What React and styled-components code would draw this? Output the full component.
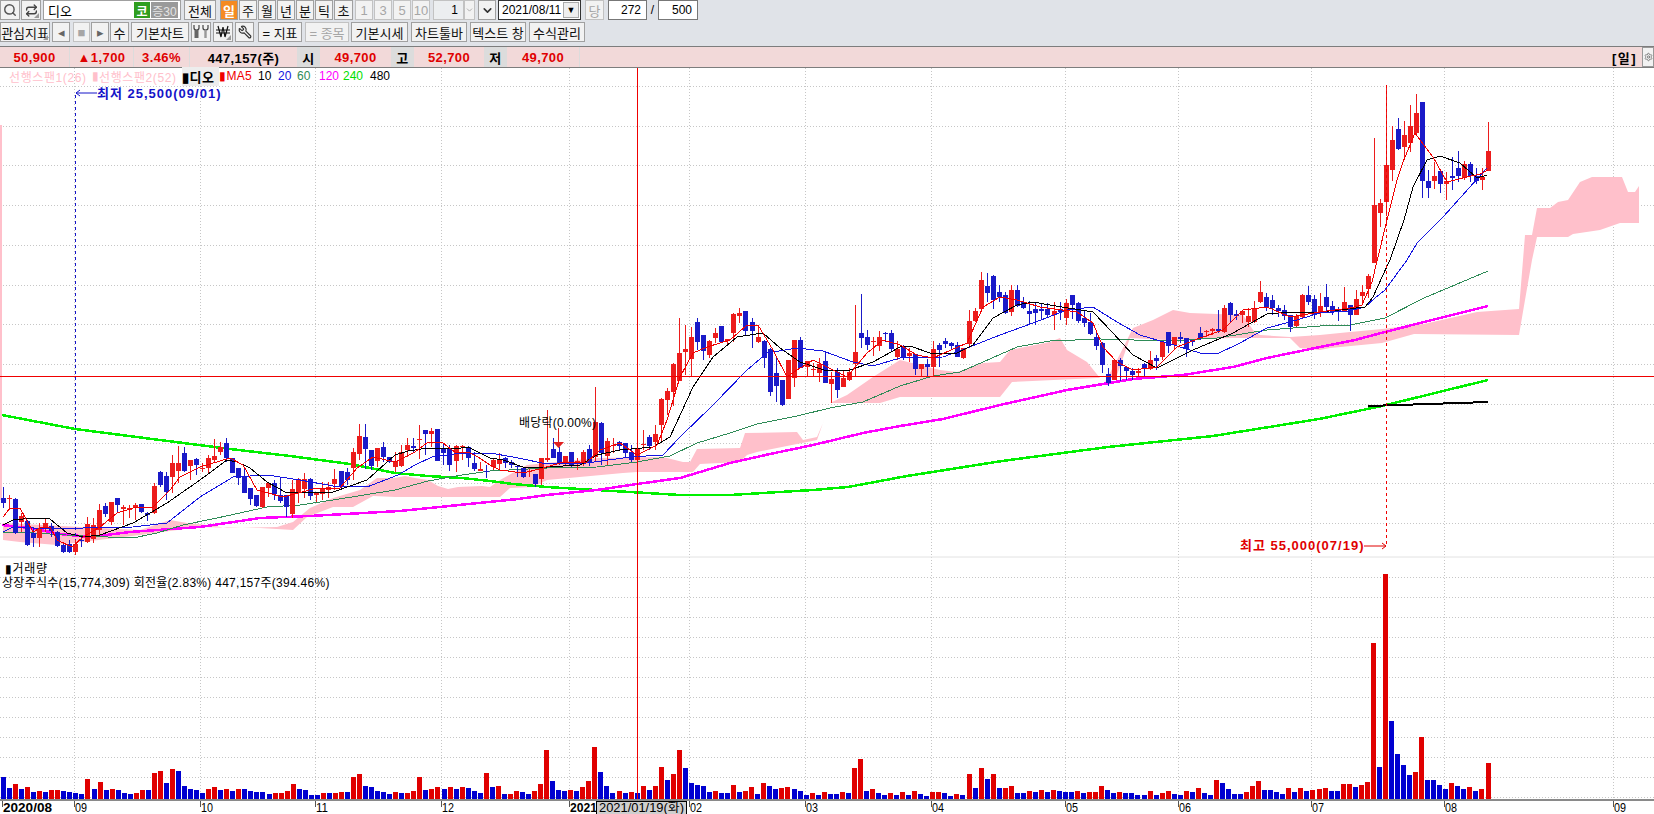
import React from 'react'
import styled, { createGlobalStyle } from 'styled-components'
import { Search, Repeat, Wrench, ChevronDown, Settings } from 'lucide-react'

const FONT = '"Liberation Sans", "Noto Sans CJK KR", sans-serif'

const GlobalStyle = createGlobalStyle`
  html, body { margin: 0; padding: 0; background: #fff; overflow: hidden; }
  body { font-family: ${FONT}; font-size: 12px; color: #000; }
`

// raw numbers are read off 3x crops, z() brings them back to page pixels
const z = (x0, y0, k, rows) =>
  rows.map(([c, x, wt, bt, bb, wb]) => ({
    c,
    x: Math.round(x0 + x / k),
    wt: Math.round(y0 + wt / k),
    bt: Math.round(y0 + bt / k),
    bb: Math.round(y0 + bb / k),
    wb: Math.round(y0 + wb / k),
  }))

const candles = [
  ...z(0, 0, 1, [
    ['b', 3, 487, 498, 503, 508], ['r', 9, 495, 498, 499, 510], ['b', 15, 498, 499, 533, 534],
    ['r', 21, 513, 516, 522, 532], ['b', 27, 520, 521, 545, 546], ['b', 33, 527, 533, 538, 547],
    ['r', 39, 523, 528, 538, 547], ['r', 45, 518, 523, 528, 532], ['b', 51, 523, 526, 531, 537],
    ['b', 57, 531, 532, 546, 547], ['b', 63, 542, 545, 552, 553], ['b', 69, 540, 544, 552, 553],
    ['r', 75, 540, 544, 552, 555], ['b', 81, 537, 540, 541, 547], ['r', 87, 517, 524, 542, 543],
    ['r', 93, 518, 525, 539, 543], ['r', 99, 504, 510, 530, 535], ['b', 105, 503, 506, 514, 517],
    ['r', 111, 502, 502, 522, 525], ['b', 117, 498, 498, 505, 513], ['r', 123, 505, 507, 509, 525],
    ['r', 129, 505, 508, 510, 518], ['r', 135, 503, 505, 508, 520], ['b', 141, 504, 504, 512, 513],
    ['b', 147, 512, 513, 515, 521],
  ]),
  ...z(0, 400, 3, [
    ['r', 462, 250, 258, 340, 342], ['b', 480, 212, 217, 255, 260], ['b', 498, 215, 228, 275, 300],
    ['r', 516, 165, 190, 232, 280], ['r', 534, 137, 188, 213, 250], ['b', 552, 140, 158, 212, 215],
    ['r', 570, 180, 180, 197, 240], ['b', 588, 175, 177, 195, 225], ['r', 606, 190, 205, 208, 215],
    ['r', 624, 165, 175, 205, 220], ['r', 642, 118, 168, 180, 185], ['r', 660, 125, 140, 155, 165],
    ['b', 678, 113, 130, 175, 185], ['b', 696, 175, 175, 218, 220], ['b', 714, 205, 205, 235, 255],
    ['b', 732, 205, 228, 278, 280], ['b', 750, 265, 265, 298, 315], ['b', 768, 285, 285, 318, 320],
    ['r', 786, 262, 262, 320, 325], ['r', 804, 250, 250, 265, 290], ['b', 822, 240, 250, 283, 300],
    ['b', 840, 235, 285, 303, 310], ['b', 858, 285, 285, 320, 350], ['r', 876, 240, 268, 342, 355],
    ['r', 894, 235, 237, 280, 310], ['r', 912, 220, 238, 268, 295], ['b', 930, 235, 237, 288, 300],
    ['r', 948, 280, 280, 285, 305], ['r', 966, 245, 268, 282, 300], ['r', 984, 245, 262, 270, 295],
    ['r', 1002, 208, 237, 252, 270], ['b', 1022, 213, 213, 260, 265], ['b', 1040, 205, 215, 240, 255],
    ['r', 1058, 145, 156, 205, 240], ['r', 1076, 72, 108, 162, 180], ['b', 1096, 72, 112, 147, 208],
    ['b', 1114, 150, 150, 197, 210], ['r', 1132, 143, 143, 182, 200], ['b', 1150, 127, 142, 170, 185],
    ['b', 1168, 170, 170, 185, 190], ['r', 1186, 155, 183, 200, 215],
  ]),
  ...z(395, 410, 3, [
    ['r', 18, 105, 127, 168, 170], ['r', 37, 85, 105, 120, 140], ['b', 55, 85, 108, 113, 130],
    ['r', 73, 45, 88, 90, 148], ['b', 91, 60, 60, 72, 135], ['r', 109, 55, 64, 72, 110],
    ['b', 127, 57, 57, 152, 152], ['b', 145, 100, 115, 130, 165], ['b', 163, 105, 118, 165, 183],
    ['r', 184, 105, 108, 153, 187], ['r', 202, 105, 108, 112, 150], ['b', 220, 108, 110, 143, 172],
    ['b', 238, 125, 160, 177, 182], ['r', 256, 155, 177, 182, 183], ['b', 274, 165, 184, 187, 205],
  ]),
  ...z(480, 280, 3, [
    ['r', 38, 535, 540, 562, 570], ['r', 56, 518, 540, 552, 568], ['b', 74, 530, 533, 549, 563],
    ['b', 92, 540, 545, 555, 563], ['b', 110, 556, 558, 562, 590], ['b', 128, 560, 563, 590, 593],
    ['r', 146, 568, 572, 575, 590], ['b', 164, 582, 582, 612, 622], ['r', 182, 535, 535, 597, 615],
    ['r', 200, 390, 535, 539, 545], ['b', 218, 475, 507, 533, 535], ['b', 236, 500, 517, 552, 555],
    ['r', 254, 528, 528, 550, 558], ['b', 272, 517, 517, 555, 560], ['r', 290, 535, 543, 549, 570],
    ['r', 308, 510, 515, 550, 558], ['b', 326, 495, 507, 545, 558], ['r', 344, 320, 425, 530, 545],
    ['b', 362, 425, 428, 520, 555], ['r', 382, 475, 483, 527, 555], ['r', 400, 475, 495, 497, 520],
    ['b', 418, 482, 487, 497, 510], ['b', 436, 490, 490, 520, 530], ['b', 454, 495, 516, 540, 545],
    ['r', 472, 505, 507, 540, 548], ['r', 490, 450, 492, 495, 510], ['b', 508, 465, 470, 497, 510],
    ['r', 526, 435, 462, 487, 510], ['r', 544, 355, 357, 435, 490], ['r', 562, 325, 333, 360, 405],
    ['r', 580, 250, 252, 335, 378], ['r', 598, 113, 220, 302, 302], ['r', 616, 135, 208, 216, 285],
    ['r', 634, 140, 170, 237, 288], ['b', 652, 113, 125, 185, 210], ['b', 670, 165, 165, 212, 240],
    ['r', 688, 180, 183, 225, 235], ['r', 706, 145, 160, 173, 190], ['b', 724, 138, 138, 185, 185],
    ['r', 742, 178, 178, 183, 195], ['r', 760, 100, 102, 158, 185], ['r', 778, 83, 100, 107, 130],
    ['b', 796, 93, 93, 152, 165], ['b', 816, 113, 125, 152, 205], ['r', 834, 135, 170, 187, 190],
    ['b', 852, 180, 182, 233, 265], ['b', 870, 205, 207, 335, 347], ['b', 888, 235, 280, 318, 365],
    ['b', 906, 300, 300, 375, 378], ['r', 924, 240, 240, 357, 357], ['r', 942, 180, 180, 295, 320],
    ['b', 960, 172, 180, 263, 263], ['r', 980, 243, 243, 262, 290], ['r', 998, 250, 268, 271, 290],
    ['r', 1016, 235, 252, 278, 305], ['b', 1034, 213, 243, 310, 310], ['r', 1052, 275, 297, 312, 368],
    ['b', 1070, 265, 275, 330, 353], ['r', 1088, 270, 295, 320, 320], ['r', 1106, 265, 275, 300, 302],
    ['r', 1124, 75, 215, 252, 290], ['b', 1142, 42, 160, 173, 205], ['b', 1160, 150, 170, 195, 210],
    ['r', 1178, 172, 182, 184, 228], ['r', 1196, 153, 170, 198, 213], ['b', 1214, 155, 160, 163, 185],
    ['b', 1232, 150, 158, 208, 212], ['r', 1250, 183, 208, 232, 240],
  ]),
  ...z(900, 240, 3, [
    ['b', 10, 315, 320, 350, 360], ['r', 28, 325, 340, 347, 365], ['b', 46, 343, 343, 387, 405],
    ['r', 64, 372, 372, 387, 408], ['b', 82, 358, 372, 381, 410], ['r', 100, 303, 327, 382, 410],
    ['b', 118, 308, 314, 330, 380], ['b', 136, 293, 303, 312, 325], ['b', 154, 305, 310, 318, 330],
    ['b', 172, 305, 315, 350, 352], ['r', 190, 325, 325, 355, 358], ['r', 208, 210, 243, 312, 318],
    ['r', 226, 205, 212, 243, 245], ['r', 244, 97, 120, 207, 212], ['b', 262, 100, 138, 158, 187],
    ['b', 280, 105, 108, 180, 207], ['b', 298, 135, 156, 170, 185], ['b', 316, 155, 165, 218, 222],
    ['r', 334, 135, 150, 215, 228], ['b', 352, 135, 150, 198, 200], ['b', 370, 170, 185, 203, 207],
    ['b', 388, 183, 213, 221, 255], ['b', 406, 185, 207, 219, 255], ['b', 424, 190, 207, 213, 237],
    ['b', 442, 190, 207, 225, 232], ['r', 462, 185, 213, 225, 270], ['b', 480, 185, 208, 215, 240],
    ['r', 498, 178, 190, 233, 255], ['b', 517, 165, 165, 195, 237], ['b', 535, 185, 188, 243, 250],
    ['b', 553, 210, 233, 250, 260], ['b', 571, 218, 245, 282, 285], ['b', 589, 280, 291, 318, 330],
    ['b', 607, 305, 310, 375, 400], ['b', 625, 385, 403, 428, 437], ['r', 643, 360, 360, 420, 420],
    ['b', 661, 353, 360, 377, 422], ['b', 679, 380, 381, 392, 420], ['b', 697, 385, 392, 405, 420],
    ['r', 715, 385, 393, 398, 408], ['b', 733, 368, 372, 385, 408], ['r', 751, 333, 360, 388, 390],
    ['b', 769, 345, 354, 362, 390], ['r', 787, 305, 305, 350, 360], ['b', 805, 276, 276, 318, 340],
    ['r', 823, 292, 292, 315, 330], ['b', 841, 275, 292, 296, 310], ['b', 859, 293, 295, 327, 352],
    ['b', 877, 300, 300, 307, 317], ['b', 899, 262, 278, 295, 300], ['r', 917, 270, 272, 277, 290],
    ['r', 935, 265, 268, 273, 285], ['b', 953, 210, 266, 272, 278], ['r', 971, 195, 204, 275, 278],
    ['b', 989, 185, 188, 225, 245], ['b', 1007, 210, 222, 228, 240], ['r', 1025, 210, 212, 226, 248],
    ['r', 1043, 205, 228, 246, 260], ['r', 1061, 182, 204, 246, 248], ['r', 1079, 123, 155, 187, 190],
    ['b', 1097, 158, 171, 203, 212], ['b', 1115, 165, 180, 205, 225], ['b', 1133, 195, 204, 212, 232],
    ['b', 1151, 195, 211, 228, 240], ['b', 1169, 225, 225, 260, 275], ['r', 1187, 222, 228, 258, 260],
    ['r', 1205, 163, 165, 232, 233], ['b', 1223, 138, 165, 185, 195], ['b', 1241, 165, 178, 225, 237],
  ]),
  ...z(1315, 210, 3, [
    ['r', 14, 250, 288, 310, 322], ['b', 32, 222, 262, 292, 310], ['b', 50, 273, 288, 305, 315],
    ['b', 68, 290, 300, 304, 332], ['r', 86, 232, 277, 303, 305], ['b', 106, 285, 285, 315, 362],
    ['r', 124, 240, 267, 315, 315], ['r', 142, 225, 246, 258, 285], ['r', 160, 192, 198, 236, 265],
    ['r', 178, -216, -15, 160, 160],
  ]),
  ...z(1300, 0, 3, [
    ['r', 241, 598, 610, 640, 680], ['r', 259, 258, 495, 605, 648], ['r', 277, 378, 420, 510, 543],
    ['b', 295, 354, 387, 447, 450], ['r', 313, 363, 405, 440, 478], ['r', 331, 315, 378, 428, 455],
    ['r', 349, 282, 339, 400, 405], ['b', 367, 306, 306, 543, 593], ['b', 385, 510, 543, 563, 593],
    ['r', 403, 487, 528, 543, 567], ['b', 421, 510, 513, 552, 578], ['r', 439, 515, 543, 552, 600],
    ['b', 457, 470, 528, 534, 570], ['b', 475, 453, 504, 528, 545], ['r', 493, 483, 492, 533, 540],
    ['b', 511, 487, 492, 528, 545], ['b', 529, 505, 528, 543, 553], ['r', 547, 505, 531, 540, 570],
    ['r', 565, 366, 453, 512, 512],
  ]),
]

// volume bars, positive red, negative blue, height in px
const volumes = [
  -22, -11, 15, -10, 12, -7, 8, -7, 9, 9, -8, -7, -6, -5, 20, -10, 17, -9, 10, -9, -6, -5, 6, 9, -9, 26, 28, -16, 30, -28,
  -13, -10, -9, -6, 10, 12, -9, 10, -8, 10, -10, -8, -7, -7, -5, 6, 6, 8, 15, -10, -9, -4, -4, 6, -6, 6, 7, -7, 22, 25,
  -13, -12, -8, -7, -5, 7, -6, 6, 8, 22, -9, 10, 12, -10, 12, -10, 12, -11, -8, -6, 26, -12, 13, -5, 5, 8, -7, -5, 8, 15,
  49, -18, -9, -8, 9, -8, 12, 18, 52, -27, -13, -6, 8, -6, 7, -6, 13, -9, 13, 32, -19, 25, 49, -31, -16, -14, -13, -7, 8, -6,
  -6, 14, -7, 8, 12, -5, 16, -13, -10, 11, 12, -10,
  -8, -4, 6, -4, 7, -5, -5, 7, -6, 31, 40, -8, 10, -6, -4, 6, -4, 7, -4, 8, -5, -3, 7, 7, -6, -3, 5, -4, 25, -11,
  31, -20, 25, -11, 11, 13, -6, -6, 8, -7, 9, -7, 9, -8, -7, -7, 8, -6, 7, 7, 13, -9, -6, 7, -6, -6, -4, -4, 8, -4,
  6, 8, -5, -4, 8, -7, 11, -6, -4, 19, -16, -10, -5, -5, 7, 13, 18, -9, -9, -7, -5, 11, -7, 11, -8, 9, 10, 11, -8, -8,
  15, 15, -12, 14, 17, 156, -32, 225, -78, -45, -34, -24, 27, 62, -19, -19, -14, -10, 16, -13, -10, 12, -8, 10, 36,
]

const ticks = [74, 200, 315, 441, 569, 689, 805, 931, 1065, 1178, 1311, 1444, 1613]
const labels = [
  [75, '09'], [201, '10'], [316, '11'], [442, '12'], [690, '02'], [806, '03'], [932, '04'],
  [1066, '05'], [1179, '06'], [1312, '07'], [1445, '08'], [1614, '09'],
]
const priceGrid = Array.from({ length: 12 }, (_, i) => Math.round(86 + 39.72 * i))
const volGrid = Array.from({ length: 12 }, (_, i) => 797 - 20 * i)

const cloudA = '3,523 140,530 170,520 187,523 207,525 227,528 277,527 293,522 310,508 333,498 360,490 377,478 395,478 405,476 415,478 428,480 438,486 448,489 458,487 482,486 490,487 500,480 527,465 597,458 663,457 683,462 690,462 697,449 740,448 745,433 797,432 803,440 817,437 823,423 830,403 817,440 797,444 757,452 747,455 740,462 700,464 693,472 637,472 623,473 547,480 533,487 510,488 500,497 395,497 373,496 353,507 333,507 307,517 293,530 260,528 200,527 140,535 57,545 20,542 3,540'
const cloudB = '830,403 847,395 873,377 900,360 940,370 957,372 983,363 1000,362 1010,350 1050,342 1060,338 1067,350 1087,362 1100,378 1097,378 1012,382 1000,397 900,397 880,403'
const cloudC = '1105,382 1117,360 1133,328 1153,320 1173,310 1190,313 1243,315 1253,330 1260,335 1290,337 1320,335 1350,332 1382,329 1424,324 1477,312 1519,309 1523,260 1525,235 1532,235 1537,208 1550,208 1558,202 1568,200 1580,182 1592,177 1622,177 1628,192 1635,192 1639,186 1639,223 1620,223 1600,230 1573,234 1568,237 1537,237 1532,260 1525,300 1519,335 1414,334 1382,343 1330,348 1320,350 1300,348 1290,338 1233,338 1167,340 1130,338 1117,375'

const ma240 = '2,415 75,429 160,440 230,449 290,456 350,464 395,473 428,476 462,478 490,481 513,484 547,487 580,489 613,491 647,493 680,495 730,495 763,493 813,490 848,487 907,476 1002,461 1108,447 1213,436 1319,419 1382,406 1488,380'
const ma120 = '2,525 30,528 60,534 90,537 130,532 200,527 260,518 310,516 400,511 518,499 547,495 597,490 637,484 680,478 730,463 770,454 813,445 863,433 900,426 943,419 1000,405 1067,390 1133,379 1183,375 1233,367 1267,358 1320,347 1355,340 1385,332 1424,322 1488,306'
const ma60 = '3,532 33,533 83,536 133,538 157,533 183,525 217,518 267,507 300,505 333,500 395,490 428,481 462,475 490,471 547,468 597,467 637,462 670,456 697,443 730,433 757,424 797,416 830,408 863,402 900,386 933,376 960,372 983,362 1017,347 1050,341 1100,339 1167,341 1217,338 1267,330 1320,326 1350,325 1385,318 1424,298 1488,271'
const ma20 = '3,532 13,527 33,528 83,528 133,527 167,523 200,497 233,477 267,475 300,480 333,486 367,487 398,475 415,465 432,457 462,453 490,453 513,457 547,464 587,463 630,457 663,455 680,437 713,405 747,370 767,353 797,348 823,351 853,362 873,366 900,358 943,357 967,348 1000,335 1033,323 1067,310 1093,307 1117,322 1140,335 1167,343 1200,353 1217,354 1240,343 1267,328 1290,322 1320,313 1348,311 1365,307 1375,298 1385,290 1407,260 1417,243 1443,217 1487,168'
const ma10 = '3,525 13,520 33,518 50,519 67,533 83,537 100,535 133,523 167,503 200,480 227,460 237,462 250,468 267,482 287,493 317,492 333,492 367,480 395,455 408,451 428,448 455,449 468,447 490,458 503,460 523,467 547,467 580,465 597,455 620,450 653,447 670,437 693,387 713,357 737,337 763,333 780,348 800,362 827,371 850,370 873,362 900,347 910,346 930,353 957,353 973,345 993,318 1017,305 1033,302 1050,305 1093,312 1113,333 1133,355 1157,368 1193,350 1233,333 1267,314 1290,312 1320,312 1348,309 1365,307 1373,297 1382,277 1390,260 1404,220 1413,187 1427,160 1440,156 1460,163 1477,178 1487,175'
const ma5 = '3,517 10,508 20,508 33,532 40,528 50,527 57,540 72,547 83,537 100,527 117,513 133,508 153,507 170,490 180,477 200,467 230,458 243,465 257,490 283,497 317,488 340,488 357,468 373,457 395,462 415,452 428,442 443,443 455,452 468,452 478,457 490,465 500,470 523,473 543,468 560,463 587,462 600,450 620,443 637,455 657,445 667,420 680,377 693,353 707,347 730,340 747,325 758,325 773,350 787,377 797,370 813,360 833,370 847,377 867,353 883,340 900,345 917,355 933,358 967,343 983,307 1000,297 1017,300 1040,307 1077,312 1093,323 1103,347 1117,362 1133,370 1157,367 1177,347 1200,338 1223,330 1243,310 1267,307 1290,317 1320,312 1350,308 1362,305 1372,282 1378,257 1387,220 1397,180 1403,162 1415,133 1433,157 1447,182 1467,177 1480,174 1488,170'

const Page = styled.div`
  width: 1654px;
  height: 814px;
  display: flex;
  flex-direction: column;
  overflow: hidden;
`
const TopBar = styled.div`
  height: 46px;
  flex: none;
  background: #e0e3e8;
  border-bottom: 1px solid #7d7d7d;
  display: flex;
  flex-direction: column;
  gap: 2px;
`
const Row = styled.div`
  display: flex;
  height: 20px;
`
const Btn = styled.div`
  position: relative;
  box-sizing: border-box;
  flex: none;
  width: ${p => p.$w}px;
  margin-left: ${p => p.$ml || 0}px;
  height: 20px;
  display: flex;
  align-items: center;
  justify-content: ${p => p.$end ? 'flex-end' : 'center'};
  overflow: hidden;
  white-space: nowrap;
  background: ${p => p.$on ? '#f58a22' : '#f2f2f2'};
  color: ${p => p.$on ? '#fff' : p.$off ? '#a6a6a6' : p.$dim ? '#666' : '#111'};
  font-weight: ${p => p.$on ? 700 : 400};
  border: 1px solid ${p => p.$off ? '#c2c2c2' : '#a0a0a0'};
  font-size: 13px;
  &::after {
    content: '';
    display: ${p => p.$corner ? 'block' : 'none'};
    position: absolute;
    right: 1px;
    bottom: 1px;
    border-style: solid;
    border-width: 0 0 5px 5px;
    border-color: transparent transparent #9b9b9b transparent;
  }
`
const CodeBox = styled.div`
  box-sizing: border-box;
  flex: none;
  width: 138px;
  margin-left: 2px;
  height: 20px;
  padding: 0 2px 0 4px;
  display: flex;
  align-items: center;
  gap: 1px;
  background: #fff;
  border: 1px solid #a0a0a0;
  font-size: 13px;
`
const CodeName = styled.span`
  flex: 1;
`
const Badge = styled.span`
  height: 16px;
  width: ${p => p.$w}px;
  display: flex;
  align-items: center;
  justify-content: center;
  background: ${p => p.$bg};
  color: ${p => p.$color};
  font-size: 12px;
  font-weight: ${p => p.$bold ? 700 : 400};
`
const Field = styled.div`
  box-sizing: border-box;
  flex: none;
  width: ${p => p.$w}px;
  margin-left: ${p => p.$ml || 0}px;
  height: 20px;
  padding: 0 5px;
  display: flex;
  align-items: center;
  justify-content: flex-end;
  background: ${p => p.$off ? '#eceef0' : '#fff'};
  border: 1px solid ${p => p.$off ? '#c2c2c2' : '#777'};
  font-size: 12px;
`
const DateField = styled(Field)`
  padding: 0 1px 0 3px;
  justify-content: space-between;
  border-color: #333;
`
const DropBtn = styled.span`
  width: 16px;
  height: 16px;
  display: flex;
  align-items: center;
  justify-content: center;
  background: #eee;
  border: 1px solid #aaa;
  box-sizing: border-box;
  font-size: 9px;
`
const Slash = styled.span`
  flex: none;
  width: 11px;
  text-align: center;
  line-height: 20px;
`
const MirrorIcon = styled.span`
  display: flex;
  transform: scaleX(-1);
`
const InfoBar = styled.div`
  height: 20px;
  flex: none;
  display: flex;
  background: #f2d9d9;
  border-bottom: 1px solid #7d7d7d;
  font-weight: 700;
  font-size: 13px;
`
const InfoCell = styled.div`
  box-sizing: border-box;
  flex: none;
  width: ${p => p.$w}px;
  display: flex;
  align-items: center;
  justify-content: center;
  letter-spacing: 0.4px;
  color: ${p => p.$black ? '#000' : '#e00000'};
  background: ${p => p.$head ? '#dcdcdc' : 'transparent'};
  border-right: 1px solid #dcdcdc;
`
const PeriodTag = styled.div`
  margin-left: auto;
  display: flex;
  align-items: center;
  letter-spacing: 1.5px;
`
const GearBtn = styled.div`
  box-sizing: border-box;
  width: 12px;
  margin-left: 5px;
  display: flex;
  align-items: center;
  padding-left: 1px;
  background: #f2f2f2;
  border: 1px solid #999;
  overflow: hidden;
`
const ChartArea = styled.div`
  position: relative;
  flex: 1;
  background: #fff;
`
const Chart = styled.svg`
  display: block;
`
const Legend = styled.div`
  position: absolute;
  left: 9px;
  top: 0;
  display: flex;
  align-items: center;
  height: 16px;
  font-size: 12px;
`
const LegendItem = styled.span`
  flex: none;
  width: ${p => p.$w}px;
  white-space: nowrap;
  color: ${p => p.$color || '#000'};
  letter-spacing: ${p => p.$ls || 0}px;
`
const StockTag = styled.span`
  flex: none;
  width: 37px;
  background: #ededed;
  font-weight: 700;
  font-size: 13px;
  letter-spacing: 0.5px;
`
const VolumeTitle = styled.div`
  position: absolute;
  left: ${p => p.$left}px;
  top: ${p => p.$top}px;
  white-space: nowrap;
  font-size: 12px;
  letter-spacing: ${p => p.$ls || 0}px;
`
const ChartText = styled.text`
  font-family: ${FONT};
  font-size: ${p => p.$size || 12}px;
  font-weight: ${p => p.$bold ? 700 : 400};
  letter-spacing: ${p => p.$ls || 0}px;
  fill: ${p => p.$fill || '#000'};
`

function Line({ points, color, width }) {
  return <polyline points={points} fill="none" stroke={color} strokeWidth={width} shapeRendering="crispEdges" />
}

function Candle({ d }) {
  const color = d.c === 'r' ? '#ec1c1c' : '#1a1ac8'
  return (
    <g fill={color}>
      <rect x={d.x} y={d.wt} width={1} height={Math.max(1, d.wb - d.wt)} />
      <rect x={d.x - 2} y={d.bt} width={5} height={Math.max(1, d.bb - d.bt)} />
    </g>
  )
}

function ToolsIcon() {
  return (
    <svg width="18" height="16" viewBox="0 0 18 16" fill="none" stroke="#444">
      <path d="M2 1v3q0 2 2.5 2T7 4V1" strokeWidth="1.2" />
      <path d="M4.5 6v8" stroke="#666" strokeWidth="4" />
      <path d="M11 1v3q0 2 2.5 2T16 4V1" strokeWidth="1.2" />
      <path d="M13.5 6v8" strokeWidth="2.4" stroke="#999" />
    </svg>
  )
}

function WonIcon() {
  return (
    <svg width="16" height="14" viewBox="0 0 16 14" fill="none" stroke="#111" strokeWidth="1.2">
      <path d="M1 5h14M1 8h14M3 1l3 11 2-10 2 10 3-11" />
    </svg>
  )
}

export default function App() {
  const n = volumes.length
  return (
    <Page>
      <GlobalStyle />
      <TopBar>
        <Row>
          <Btn $w={20}><Search size={14} color="#555" strokeWidth={2.5} /></Btn>
          <Btn $w={20} $ml={1} $corner><Repeat size={13} color="#444" strokeWidth={2.5} /></Btn>
          <CodeBox>
            <CodeName>디오</CodeName>
            <Badge $w={16} $bg="#2f9e1f" $color="#fff" $bold>코</Badge>
            <Badge $w={27} $bg="#9a9a9a" $color="#e4e4e4">증30</Badge>
          </CodeBox>
          <Btn $w={32} $ml={3}>전체</Btn>
          <Btn $w={18} $ml={4} $on>일</Btn>
          <Btn $w={18} $ml={1}>주</Btn>
          <Btn $w={18} $ml={1}>월</Btn>
          <Btn $w={18} $ml={1}>년</Btn>
          <Btn $w={18} $ml={1}>분</Btn>
          <Btn $w={18} $ml={1}>틱</Btn>
          <Btn $w={19} $ml={1}>초</Btn>
          <Btn $w={18} $ml={2} $off>1</Btn>
          <Btn $w={18} $ml={1} $off>3</Btn>
          <Btn $w={18} $ml={1} $off>5</Btn>
          <Btn $w={18} $ml={1} $off>10</Btn>
          <Field $w={31} $ml={3} $off>1</Field>
          <Btn $w={11} $off><ChevronDown size={10} color="#999" /></Btn>
          <Btn $w={18} $ml={3}><ChevronDown size={13} color="#333" strokeWidth={3} /></Btn>
          <DateField $w={83} $ml={2}>2021/08/11<DropBtn>▼</DropBtn></DateField>
          <Btn $w={19} $ml={4} $off>당</Btn>
          <Field $w={39} $ml={4}>272</Field>
          <Slash>/</Slash>
          <Field $w={40}>500</Field>
        </Row>
        <Row>
          <Btn $w={50} $end $corner>관심지표</Btn>
          <Btn $w={18} $ml={2} $dim>◂</Btn>
          <Btn $w={17} $ml={3} $off>■</Btn>
          <Btn $w={18} $ml={1} $dim>▸</Btn>
          <Btn $w={19} $ml={1}>수</Btn>
          <Btn $w={58} $ml={2}>기본차트</Btn>
          <Btn $w={20} $ml={2}><ToolsIcon /></Btn>
          <Btn $w={20} $ml={2} $corner><WonIcon /></Btn>
          <Btn $w={19} $ml={2}><MirrorIcon><Wrench size={14} color="#333" /></MirrorIcon></Btn>
          <Btn $w={44} $ml={4}>= 지표</Btn>
          <Btn $w={44} $ml={3} $off>= 종목</Btn>
          <Btn $w={57} $ml={2}>기본시세</Btn>
          <Btn $w={56} $ml={3}>차트툴바</Btn>
          <Btn $w={56} $ml={3}>텍스트 창</Btn>
          <Btn $w={56} $ml={3}>수식관리</Btn>
        </Row>
      </TopBar>
      <InfoBar>
        <InfoCell $w={70}>50,900</InfoCell>
        <InfoCell $w={64}>▲1,700</InfoCell>
        <InfoCell $w={56}>3.46%</InfoCell>
        <InfoCell $w={108} $black>447,157(주)</InfoCell>
        <InfoCell $w={22} $black $head>시</InfoCell>
        <InfoCell $w={72}>49,700</InfoCell>
        <InfoCell $w={22} $black $head>고</InfoCell>
        <InfoCell $w={71}>52,700</InfoCell>
        <InfoCell $w={22} $black $head>저</InfoCell>
        <InfoCell $w={73}>49,700</InfoCell>
        <PeriodTag>[일]</PeriodTag>
        <GearBtn><Settings size={12} color="#666" /></GearBtn>
      </InfoBar>
      <ChartArea>
        <Chart width="1654" height="746" viewBox="0 68 1654 746">
          <g stroke="#c6c6c6" strokeDasharray="1 2" shapeRendering="crispEdges">
            {ticks.map(x => <line key={x} x1={x} y1="68" x2={x} y2="800" />)}
            {priceGrid.map(y => <line key={y} x1="0" y1={y} x2="1654" y2={y} />)}
            {volGrid.map(y => <line key={y} x1="0" y1={y} x2="1654" y2={y} />)}
          </g>
          <line x1="0" y1="557" x2="1654" y2="557" stroke="#e2e2e2" />

          <rect x="0" y="125" width="2" height="375" fill="#ffc0cb" />
          <g fill="#ffc0cb">
            <polygon points={cloudA} />
            <polygon points={cloudB} />
            <polygon points={cloudC} />
          </g>

          <Line points={ma240} color="#00f000" width={2.5} />
          <Line points={ma120} color="#ff00ff" width={2.5} />
          <Line points="1368,406 1488,402" color="#000" width={2} />
          <Line points={ma60} color="#2e8b57" width={1} />

          {candles.map((d, i) => <Candle key={i} d={d} />)}

          <Line points={ma20} color="#1414e0" width={1} />
          <Line points={ma10} color="#000" width={1} />
          <Line points={ma5} color="#f00000" width={1} />

          <line x1="75.5" y1="95" x2="75.5" y2="540" stroke="#1414c8" strokeDasharray="3 3" />
          <line x1="1386.5" y1="85" x2="1386.5" y2="546" stroke="#f00000" strokeDasharray="3 3" />
          <path d="M76 93h21M76 93l4-3M76 93l4 3" fill="none" stroke="#1414c8" />
          <ChartText x="97" y="98" $bold $size={13} $ls={1} $fill="#1414c8">최저 25,500(09/01)</ChartText>
          <ChartText x="1240" y="550" $bold $size={13} $ls={1} $fill="#e00000">최고 55,000(07/19)</ChartText>
          <path d="M1364 546h22M1386 546l-4-3M1386 546l-4 3" fill="none" stroke="#e00000" />

          <ChartText x="519" y="427" $ls={0.2}>배당락(0.00%)</ChartText>
          <line x1="558.5" y1="428" x2="558.5" y2="443" stroke="#e02020" />
          <polygon points="553,442 564,442 558.5,448" fill="#e02020" />

          {volumes.map((v, i) => {
            const x = Math.round(1 + (i * 1484.5) / (n - 1))
            const h = Math.abs(v)
            return <rect key={i} x={x} y={799 - h} width={5} height={h} fill={v > 0 ? '#e00000' : '#0000d0'} />
          })}

          <line x1="637.5" y1="68" x2="637.5" y2="800" stroke="#f00000" />
          <line x1="0" y1="376.5" x2="1654" y2="376.5" stroke="#f00000" />

          <rect x="0" y="799" width="1654" height="2" fill="#8a8a8a" />
          {[2, ...ticks].map(x => <line key={x} x1={x + 0.5} y1="801" x2={x + 0.5} y2="807" stroke="#555" />)}
          <ChartText x="3" y="812" $bold $size={13} textLength="49" lengthAdjust="spacingAndGlyphs">2020/08</ChartText>
          <ChartText x="570" y="812" $bold $size={13} textLength="27" lengthAdjust="spacingAndGlyphs">2021</ChartText>
          {labels.map(([x, t]) => (
            <ChartText key={x} x={x} y="812" $size={13} textLength="12" lengthAdjust="spacingAndGlyphs">{t}</ChartText>
          ))}
          <rect x="596.5" y="801.5" width="90" height="14" fill="#cfcfcf" stroke="#000" />
          <ChartText x="599" y="812" $size={12} textLength="85" lengthAdjust="spacingAndGlyphs">2021/01/19(화)</ChartText>
        </Chart>
        <Legend>
          <LegendItem $w={83} $color="#ffc0cb" $ls={0.6}>선행스팬1(26)</LegendItem>
          <LegendItem $w={7} $color="#ffc0cb">▮</LegendItem>
          <LegendItem $w={83} $color="#ffc0cb" $ls={0.6}>선행스팬2(52)</LegendItem>
          <StockTag>▮디오</StockTag>
          <LegendItem $w={26} $color="#f00000" $ls={0.4}>▮MA</LegendItem>
          <LegendItem $w={13} $color="#f00000">5</LegendItem>
          <LegendItem $w={20}>10</LegendItem>
          <LegendItem $w={19} $color="#1414e0">20</LegendItem>
          <LegendItem $w={22} $color="#2e8b57">60</LegendItem>
          <LegendItem $w={24} $color="#ff00ff">120</LegendItem>
          <LegendItem $w={27} $color="#00e000">240</LegendItem>
          <LegendItem $w={24}>480</LegendItem>
        </Legend>
        <VolumeTitle $left={5} $top={491} $ls={0.6}>▮거래량</VolumeTitle>
        <VolumeTitle $left={2} $top={505} $ls={0.28}>상장주식수(15,774,309) 회전율(2.83%) 447,157주(394.46%)</VolumeTitle>
      </ChartArea>
    </Page>
  )
}
